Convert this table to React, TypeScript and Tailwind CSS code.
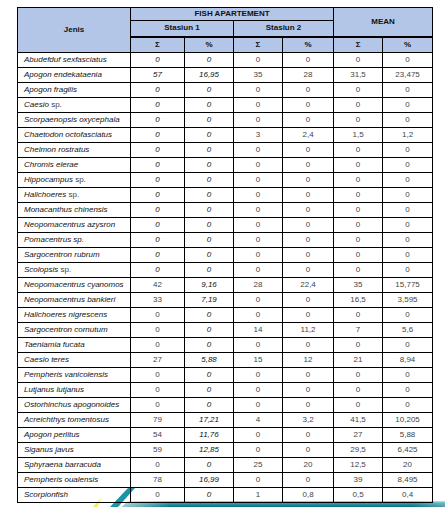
import React from "react";

type Row = {
  name: string;
  sp?: string; // upright suffix like "sp."
  s1n: string;
  s1p: string;
  s2n: string;
  s2p: string;
  mn: string;
  mp: string;
};

const z = (name: string, sp?: string): Row => ({
  name,
  sp,
  s1n: "0",
  s1p: "0",
  s2n: "0",
  s2p: "0",
  mn: "0",
  mp: "0",
});

const rows: Row[] = [
  z("Abudefduf sexfasciatus"),
  { name: "Apogon endekataenia", s1n: "57", s1p: "16,95", s2n: "35", s2p: "28", mn: "31,5", mp: "23,475" },
  z("Apogon fragilis"),
  z("Caesio", "sp."),
  z("Scorpaenopsis oxycephala"),
  { name: "Chaetodon octofasciatus", s1n: "0", s1p: "0", s2n: "3", s2p: "2,4", mn: "1,5", mp: "1,2" },
  z("Chelmon rostratus"),
  z("Chromis elerae"),
  z("Hippocampus", "sp."),
  z("Halichoeres", "sp."),
  z("Monacanthus chinensis"),
  z("Neopomacentrus azysron"),
  z("Pomacentrus sp."),
  z("Sargocentron rubrum"),
  z("Scolopsis", "sp."),
  { name: "Neopomacentrus cyanomos", s1n: "42", s1p: "9,16", s2n: "28", s2p: "22,4", mn: "35", mp: "15,775" },
  { name: "Neopomacentrus bankieri", s1n: "33", s1p: "7,19", s2n: "0", s2p: "0", mn: "16,5", mp: "3,595" },
  z("Halichoeres nigrescens"),
  { name: "Sargocentron cornutum", s1n: "0", s1p: "0", s2n: "14", s2p: "11,2", mn: "7", mp: "5,6" },
  z("Taeniamia fucata"),
  { name: "Caesio teres", s1n: "27", s1p: "5,88", s2n: "15", s2p: "12", mn: "21", mp: "8,94" },
  z("Pempheris vanicolensis"),
  z("Lutjanus lutjanus"),
  z("Ostorhinchus apogonoides"),
  { name: "Acreichthys tomentosus", s1n: "79", s1p: "17,21", s2n: "4", s2p: "3,2", mn: "41,5", mp: "10,205" },
  { name: "Apogon perlitus", s1n: "54", s1p: "11,76", s2n: "0", s2p: "0", mn: "27", mp: "5,88" },
  { name: "Siganus javus", s1n: "59", s1p: "12,85", s2n: "0", s2p: "0", mn: "29,5", mp: "6,425" },
  { name: "Sphyraena barracuda", s1n: "0", s1p: "0", s2n: "25", s2p: "20", mn: "12,5", mp: "20" },
  { name: "Pempheris oualensis", s1n: "78", s1p: "16,99", s2n: "0", s2p: "0", mn: "39", mp: "8,495" },
  { name: "Scorpionfish", s1n: "0", s1p: "0", s2n: "1", s2p: "0,8", mn: "0,5", mp: "0,4" },
];

const th = "border border-black bg-[#b4c6e7] font-bold text-center p-0 text-[#111]";
const td = "border border-black p-0 text-center h-[15px]";
const num = "text-[#444]";
const ital = "italic text-[#111]";

function Swoosh() {
  // decorative wave at the foot of the page, sits behind the table
  return (
    <svg
      className="absolute left-0 top-[484px]"
      width="445"
      height="23"
      viewBox="0 484 445 23"
    >
      <defs>
        <linearGradient id="bar" x1="0" y1="0" x2="0" y2="1">
          <stop offset="0" stopColor="#9fdbe2" />
          <stop offset="0.35" stopColor="#2a9fb0" />
          <stop offset="1" stopColor="#0d6f82" />
        </linearGradient>
        <linearGradient id="barH" x1="0" y1="0" x2="1" y2="0">
          <stop offset="0" stopColor="#ffffff" stopOpacity="0.6" />
          <stop offset="0.15" stopColor="#ffffff" stopOpacity="0" />
          <stop offset="0.9" stopColor="#ffffff" stopOpacity="0" />
          <stop offset="1" stopColor="#ffffff" stopOpacity="0.3" />
        </linearGradient>
        <linearGradient id="yel" x1="0" y1="1" x2="0" y2="0">
          <stop offset="0" stopColor="#f1ea3a" />
          <stop offset="1" stopColor="#f1ea3a" stopOpacity="0" />
        </linearGradient>
      </defs>
      <polygon points="93,507 97,507 104,496 101,496" fill="url(#yel)" />
      <polygon points="110,507 118,507 135,488 128,488" fill="#1a95a6" />
      <polygon points="122,507 128,501 445,501 445,507" fill="url(#bar)" />
      <polygon points="122,507 128,501 445,501 445,507" fill="url(#barH)" />
    </svg>
  );
}

export default function App() {
  return (
    <div className="relative w-[445px] h-[507px] bg-white overflow-hidden font-['Liberation_Sans',Arial,sans-serif] text-[8px] leading-none">
      <Swoosh />
      <div className="relative pt-[7px] pl-[17px]">
        <table className="border-collapse table-fixed w-[415px]">
          <colgroup>
            <col className="w-[113px]" />
            <col className="w-[54px]" />
            <col className="w-[49px]" />
            <col className="w-[49px]" />
            <col className="w-[51px]" />
            <col className="w-[49px]" />
            <col className="w-[50px]" />
          </colgroup>
          <thead>
            <tr className="h-[13px]">
              <th rowSpan={3} className={th}>
                Jenis
              </th>
              <th colSpan={4} className={th}>
                FISH APARTEMENT
              </th>
              <th colSpan={2} rowSpan={2} className={`${th} border-b-2`}>
                MEAN
              </th>
            </tr>
            <tr className="h-[16px]">
              <th colSpan={2} className={`${th} border-b-2`}>
                Stasiun 1
              </th>
              <th colSpan={2} className={`${th} border-b-2`}>
                Stasiun 2
              </th>
            </tr>
            <tr className="h-[16px]">
              <th className={th}>Σ</th>
              <th className={th}>%</th>
              <th className={th}>Σ</th>
              <th className={th}>%</th>
              <th className={th}>Σ</th>
              <th className={th}>%</th>
            </tr>
          </thead>
          <tbody>
            {rows.map((r, i) => (
              <tr key={r.name}>
                <td className={`${td} text-left pl-[6px] whitespace-nowrap`}>
                  <span className={ital}>{r.name}</span>
                  {r.sp && <span className={num}> {r.sp}</span>}
                </td>
                <td className={`${td} ${i < 15 ? ital : num}`}>{r.s1n}</td>
                <td className={`${td} ${ital}`}>{r.s1p}</td>
                <td className={`${td} ${num}`}>{r.s2n}</td>
                <td className={`${td} ${num}`}>{r.s2p}</td>
                <td className={`${td} ${num}`}>{r.mn}</td>
                <td className={`${td} ${num}`}>{r.mp}</td>
              </tr>
            ))}
          </tbody>
        </table>
      </div>
    </div>
  );
}
